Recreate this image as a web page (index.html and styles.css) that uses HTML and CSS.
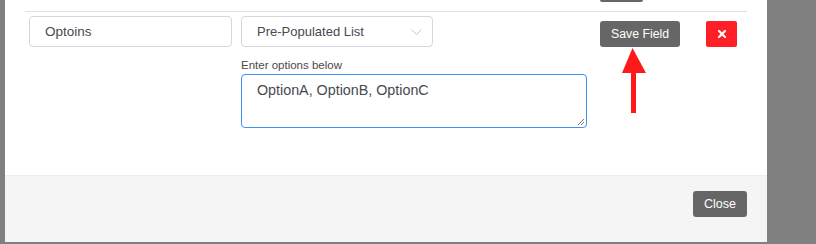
FILE: index.html
```html
<!DOCTYPE html>
<html>
<head>
<meta charset="utf-8">
<link rel="stylesheet" href="styles.css">
</head>
<body>
<div class="modal">
  <div class="modal-body">
    <div class="prev-btn"></div>
    <div class="divider"></div>
    <div class="field-row">
      <div class="name-input">Optoins</div>
      <div class="type-col">
        <div class="select">
          <span>Pre-Populated List</span>
          <svg class="chevron" width="11" height="7" viewBox="0 0 11 7"><polyline points="0.5,0.5 5.5,5.5 10.5,0.5" fill="none" stroke="#c4c4cc" stroke-width="1"/></svg>
        </div>
        <div class="opt-label">Enter options below</div>
        <div class="textarea">OptionA, OptionB, OptionC
          <svg class="grip" width="8" height="8" viewBox="0 0 8 8"><path d="M7 1L1 7M7 4L4 7" stroke="#777" stroke-width="1"/></svg>
        </div>
      </div>
      <div class="actions">
        <div class="btn-save">Save Field</div>
        <div class="btn-delete">
          <svg width="8" height="8" viewBox="0 0 8 8"><path d="M1 1L7 7M7 1L1 7" stroke="#fff" stroke-width="2.2" stroke-linecap="square"/></svg>
        </div>
      </div>
    </div>
    <svg class="arrow" width="27" height="66" viewBox="0 0 27 66"><polygon points="11.5,0 1,25 25,25" fill="#ff1a1a"/><rect x="10" y="24" width="5" height="41" fill="#ff1a1a"/></svg>
  </div>
  <div class="modal-footer">
    <div class="btn-close">Close</div>
  </div>
</div>
</body>
</html>
```

FILE: styles.css
```css
html, body {
  margin: 0;
  padding: 0;
}
body {
  background: #808080;
  width: 816px;
  height: 244px;
  overflow: hidden;
  font-family: "Liberation Sans", Arial, sans-serif;
}
.modal {
  margin-left: 5px;
  width: 762px;
  height: 242px;
  background: #fff;
  display: flex;
  flex-direction: column;
}
.modal-body {
  position: relative;
  height: 175px;
  padding: 0 20px;
  box-sizing: border-box;
}
.prev-btn {
  margin-left: 575px;
  width: 43px;
  height: 2px;
  background: #666;
  border-radius: 0 0 3px 3px;
}
.divider {
  margin-top: 9px;
  height: 1px;
  background: #dee2e6;
}
.field-row {
  display: flex;
  margin-top: 4px;
  padding-left: 4px;
}
.name-input {
  width: 203px;
  height: 31px;
  box-sizing: border-box;
  border: 1px solid #d6d6de;
  border-radius: 4px;
  padding-left: 15px;
  font-size: 13.5px;
  line-height: 29px;
  color: #454a50;
  margin-right: 9px;
}
.type-col {
  width: 346px;
}
.select {
  width: 192px;
  height: 31px;
  box-sizing: border-box;
  border: 1px solid #d6d6de;
  border-radius: 4px;
  padding: 0 10px 0 15px;
  font-size: 13px;
  line-height: 29px;
  color: #454a50;
  display: flex;
  justify-content: space-between;
  align-items: center;
}
.chevron {
  margin-top: 1px;
}
.opt-label {
  margin-top: 11px;
  font-size: 11.5px;
  line-height: 14px;
  color: #4a4a4a;
}
.textarea {
  position: relative;
  margin-top: 2px;
  height: 54px;
  box-sizing: border-box;
  border: 1px solid #3d94f6;
  border-radius: 4px;
  padding: 5px 15px;
  font-size: 14.3px;
  line-height: 20px;
  color: #454a50;
}
.grip {
  position: absolute;
  right: 1px;
  bottom: 1px;
}
.actions {
  display: flex;
  align-items: flex-start;
  margin-left: 13px;
  margin-top: 5px;
}
.btn-save {
  width: 80px;
  height: 26px;
  background: #666;
  border-radius: 3px;
  color: #fff;
  font-size: 12.3px;
  line-height: 26px;
  text-align: center;
  margin-right: 26px;
}
.btn-delete {
  width: 31px;
  height: 26px;
  background: #ff1f26;
  border-radius: 2px;
  display: flex;
  align-items: center;
  justify-content: center;
}
.arrow {
  position: absolute;
  left: 616px;
  top: 48px;
}
.modal-footer {
  flex: 1;
  background: #f5f5f5;
  border-top: 1px solid #ececec;
  display: flex;
  justify-content: flex-end;
  align-items: flex-start;
  padding: 15px 20px 0 0;
}
.btn-close {
  width: 54px;
  height: 26px;
  background: #666;
  border-radius: 3px;
  color: #fff;
  font-size: 12.5px;
  line-height: 26px;
  text-align: center;
}
```
